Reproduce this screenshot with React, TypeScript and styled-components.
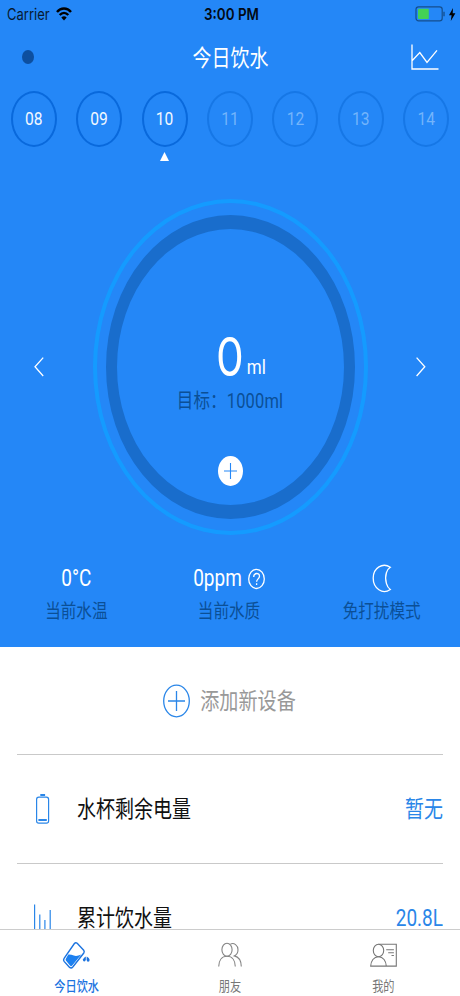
import React from 'react';
import styled, { createGlobalStyle } from 'styled-components';

const BLUE = '#2487f7';
const NAVY = '#0b4f96';
const ACCENT = '#2a86e8';

const GlobalStyle = createGlobalStyle`
  * { box-sizing: border-box; }
  body { margin: 0; background: #fff; }
`;

const Screen = styled.div`
  width: 460px;
  height: 996px;
  display: flex;
  flex-direction: column;
  overflow: hidden;
  background: #fff;
  font-family: Roboto, 'Noto Sans CJK SC', sans-serif;
`;

/* Type is condensed: drawn at its natural width and stretched in height. */
const Text = styled.span<{ $size: number; $color?: string; $weight?: number; $track?: number }>`
  display: inline-block;
  flex: none;
  white-space: nowrap;
  line-height: 20px;
  font-size: ${(p) => p.$size}px;
  font-weight: ${(p) => p.$weight ?? 400};
  letter-spacing: ${(p) => p.$track ?? 0}px;
  color: ${(p) => p.$color ?? '#fff'};
  transform: scaleY(1.218);
`;

const InterText = styled(Text)`
  font-family: Inter, sans-serif;
`;

const Title = styled(Text)`
  margin-top: 3px;
`;

const DeviceText = styled(Text)`
  margin-top: 4px;
`;

const RowText = styled(Text)`
  margin-top: 2px;
  line-height: 17px;
`;

const Hero = styled.section`
  flex: none;
  height: 646.5px;
  display: flex;
  flex-direction: column;
  background: ${BLUE};
`;

const StatusBar = styled.header`
  height: 28px;
  padding: 0 4px 0 7px;
  display: grid;
  grid-template-columns: 1fr auto 1fr;
  align-items: center;
`;

const StatusGroup = styled.div<{ $end?: boolean }>`
  display: flex;
  align-items: center;
  gap: ${(p) => (p.$end ? 4 : 6)}px;
  justify-content: ${(p) => (p.$end ? 'flex-end' : 'flex-start')};
`;

const NavBar = styled.nav`
  height: 58px;
  padding: 0 21px 0 22px;
  display: grid;
  grid-template-columns: 1fr auto 1fr;
  align-items: center;
`;

const StatusDot = styled.span`
  width: 12px;
  height: 14px;
  border-radius: 50%;
  background: #0d4f9f;
`;

const ChartButton = styled.span`
  justify-self: end;
  height: 28px;
`;

const Days = styled.div`
  height: 77px;
  padding: 5px 1px 0;
  display: grid;
  grid-template-columns: repeat(7, 1fr);
  justify-items: center;
`;

const Day = styled.div`
  display: flex;
  flex-direction: column;
  align-items: center;
  gap: 5px;
`;

const DayCircle = styled.div<{ $future: boolean }>`
  width: 46px;
  height: 56px;
  display: grid;
  place-items: center;
  border: 2px solid ${(p) => (p.$future ? '#1677e6' : '#0969dc')};
  border-radius: 50%;
`;

const Dial = styled.div`
  margin-top: 36px;
  height: 336px;
  padding: 0 34px;
  display: flex;
  align-items: center;
  justify-content: space-between;
`;

const OuterRing = styled.div`
  width: 275px;
  height: 336px;
  display: grid;
  place-items: center;
  border: 4px solid #149bff;
  border-radius: 50%;
`;

const InnerRing = styled.div`
  width: 249px;
  height: 304px;
  padding-top: 118px;
  display: flex;
  flex-direction: column;
  align-items: center;
  border: solid #196dcc;
  border-width: 14px 11px;
  border-radius: 50%;
`;

const Amount = styled.div`
  height: 44px;
  padding-left: 22px;
  display: flex;
  align-items: baseline;
  gap: 3px;
`;

const Goal = styled.div`
  height: 20px;
  margin-top: 1px;
`;

const AddWater = styled.div`
  width: 25px;
  height: 30px;
  margin-top: 44px;
  display: grid;
  place-items: center;
  border-radius: 50%;
  background: #fff;
`;

const Stats = styled.div`
  height: 66px;
  margin-top: 30px;
  padding: 0 2px 0 0;
  display: grid;
  grid-template-columns: repeat(3, 1fr);
`;

const Stat = styled.div`
  display: flex;
  flex-direction: column;
  align-items: center;
`;

const StatValue = styled.div`
  height: 28px;
  display: flex;
  align-items: center;
  gap: 6px;
`;

const StatLabel = styled.div`
  height: 20px;
  margin-top: 9px;
`;

const List = styled.main`
  flex: 1;
  min-height: 0;
  overflow: hidden;
  padding: 0 17px;
`;

const AddDevice = styled.div`
  height: 108.5px;
  padding-right: 1px;
  display: flex;
  align-items: center;
  justify-content: center;
  gap: 10px;
  border-bottom: 1px solid #c9c9c9;
`;

const Row = styled.div`
  height: 108.5px;
  padding-left: 15px;
  display: grid;
  grid-template-columns: 45px 1fr auto;
  align-items: center;
  border-bottom: 1px solid #c9c9c9;
`;

const TabBar = styled.footer`
  flex: none;
  height: 67px;
  display: grid;
  grid-template-columns: repeat(3, 1fr);
  border-top: 1px solid #ccc;
  background: #fff;
`;

const Tab = styled.div`
  display: flex;
  flex-direction: column;
  align-items: center;
  padding-top: 12px;
  gap: 8px;
`;

const Icon = styled.svg`
  display: block;
  flex: none;
  overflow: visible;
  fill: none;
`;

const Wifi = () => (
  <Icon width="16" height="14" viewBox="0 0 16 14" stroke="#000" strokeWidth="2.4">
    <path d="M1 4.9C4.8.4 11.2.4 15 4.9" />
    <path d="M3.7 8C6.2 5.2 9.8 5.2 12.3 8" />
    <path d="M8 13.6 5.3 10.4Q8 8 10.7 10.4Z" fill="#000" stroke="none" />
  </Icon>
);

const Charging = () => (
  <>
    <Icon width="29" height="16" viewBox="0 0 29 16">
      <rect x="0" y=".9" width="26.2" height="14" rx="2.6" stroke="#144e8d" strokeWidth="1.2" />
      <rect x="2" y="2.8" width="10.8" height="10.2" rx=".8" fill="#43d255" />
      <path d="M28 5.7v4.6" stroke="#144e8d" strokeWidth="1.3" />
    </Icon>
    <Icon width="7" height="13" viewBox="0 0 7 13">
      <path d="M4 0 0 7.2h2.6L1.8 13 6.4 5.3H3.7Z" fill="#000" />
    </Icon>
  </>
);

const LineChart = () => (
  <Icon width="28" height="28" viewBox="0 0 28 28" stroke="#fff" strokeWidth="1.3">
    <path d="M1 1.5V26H27.5M1.3 17.5 8.8 9.5 16 19.5 26 7.3" />
  </Icon>
);

const Chevron = ({ right = false }: { right?: boolean }) => (
  <Icon width="10" height="20" viewBox="0 0 10 20" stroke="#fff" strokeWidth="1.3">
    <path d={right ? 'M.6 .6 8.8 9.8 .6 19' : 'M9.2 .6 1 9.8 9.2 19'} />
  </Icon>
);

const Marker = () => (
  <Icon width="9" height="9" viewBox="0 0 9 9">
    <path d="M4.5 0 9 9H0Z" fill="#fff" />
  </Icon>
);

const Plus = () => (
  <Icon width="13" height="16" viewBox="0 0 13 16" stroke={BLUE} strokeWidth="1.1">
    <path d="M6.5 0v16M0 8h13" />
  </Icon>
);

const Help = () => (
  <Icon width="17" height="21" viewBox="0 0 17 21" stroke="#fff" strokeWidth="1.3">
    <ellipse cx="8.5" cy="9.9" rx="7.8" ry="9.6" />
    <path d="M5.7 8c0-4.6 5.8-4.5 5.8-.8 0 2.5-2.9 2.9-2.9 5.6M8.6 14.2v1.8" />
  </Icon>
);

const Moon = () => (
  <Icon width="18" height="28" viewBox="0 0 18 28" stroke="#fff" strokeWidth="1.3">
    <path d="M17.3 2.2C9.8-2.7.2 2.5.2 13.1s9.5 16.8 17.1 11.4Q14.6 22.7 13.4 18.3C12.5 14.8 12.3 11.1 13.4 7.7Q14.6 3.8 17.3 2.2Z" />
  </Icon>
);

const CirclePlus = () => (
  <Icon width="27" height="33" viewBox="0 0 27 33" stroke={ACCENT} strokeWidth="1.3">
    <ellipse cx="13.5" cy="17" rx="12.8" ry="15.8" />
    <path d="M13.5 7v20M5 17h17" />
  </Icon>
);

const Cell = () => (
  <Icon width="21" height="30" viewBox="0 0 21 30" stroke={ACCENT} strokeWidth="1.2">
    <rect x="4.6" y="3.2" width="12" height="26" rx="2.2" />
    <path d="M8.3 1h4.8M6.4 26h8.4" strokeWidth="1.8" />
  </Icon>
);

const Bars = () => (
  <Icon width="21" height="26" viewBox="0 0 21 26" stroke={ACCENT} strokeWidth="1.2">
    <path d="M2.6 .5v26M7.8 10.5v16M12.9 16v10.5M18.2 6v20.5" />
  </Icon>
);

const Bottle = () => (
  <Icon width="27" height="27" viewBox="0 0 27 27" stroke="#1c73df" strokeWidth="1.4">
    <path d="M11.4 1.5Q12.7.1 14.2 1.3L20.7 8.3Q21.7 9.6 20.8 11L9.8 25Q8.3 26.8 6.6 25.4L1.1 19.4Q0 18 1.1 16.4Z" />
    <path d="M5.3 12.6Q8 12.4 10.8 13.6T18.3 12.6L9 23.8Q8 24.8 7 23.6L2.9 18.6Q2.3 17.6 3 16.6Z" fill="#1c80f0" stroke="none" />
    <path d="M22.8 14.6V17.8Q22.5 19.7 21 19.5 19.6 19 20.1 17.3 20.8 15.8 22.8 14.6Z" fill="#1c73df" stroke="none" />
    <path d="M23.7 14.4Q26.4 15.8 26.6 17.7 26.6 19.6 25.1 19.8 23.7 19.6 23.6 17.8Z" fill="#1c73df" stroke="none" />
  </Icon>
);

const Friends = () => (
  <Icon width="24" height="27" viewBox="0 0 24 27" stroke="#858585" strokeWidth="1.1">
    <ellipse cx="9" cy="7.7" rx="5.1" ry="6.5" />
    <path d="M.7 24.5C.8 18.8 3.5 14.3 9 14.3s8.2 4.5 8.3 10.2M12.5 2.1C16 .4 20 3.2 20 7.7c0 3-1.7 5.3-3.7 6.2 4.4 1 6.9 5.5 7 10.6" />
  </Icon>
);

const Profile = () => (
  <Icon width="27" height="27" viewBox="0 0 27 27" stroke="#777" strokeWidth="1.1">
    <ellipse cx="8.5" cy="8.5" rx="5.2" ry="6.2" />
    <path d="M8.5 2.3h17.8v21.8H.7c.2-5 3-9.4 7.8-9.4s7.5 4.4 7.8 9.4M16.2 7.7h7.7M18.2 10.7h5.7M21.5 13.5h2.4" />
  </Icon>
);

const days = ['08', '09', '10', '11', '12', '13', '14'];
const TODAY = 2;

export default function App() {
  return (
    <>
      <GlobalStyle />
      <Screen>
        <Hero>
          <StatusBar>
            <StatusGroup>
              <InterText $size={13} $color="#071a30">Carrier</InterText>
              <Wifi />
            </StatusGroup>
            <InterText $size={13.4} $weight={600} $color="#020a14">3:00 PM</InterText>
            <StatusGroup $end>
              <Charging />
            </StatusGroup>
          </StatusBar>

          <NavBar>
            <StatusDot />
            <Title $size={19}>今日饮水</Title>
            <ChartButton><LineChart /></ChartButton>
          </NavBar>

          <Days>
            {days.map((day, i) => (
              <Day key={day}>
                <DayCircle $future={i > TODAY}>
                  <Text $size={15.6} $color={i > TODAY ? '#73b4fb' : '#f2f8ff'}>{day}</Text>
                </DayCircle>
                {i === TODAY && <Marker />}
              </Day>
            ))}
          </Days>

          <Dial>
            <Chevron />
            <OuterRing>
              <InnerRing>
                <Amount>
                  <InterText $size={44}>0</InterText>
                  <Text $size={17}>ml</Text>
                </Amount>
                <Goal><Text $size={16.5} $track={0.15} $color={NAVY}>目标：1000ml</Text></Goal>
                <AddWater><Plus /></AddWater>
              </InnerRing>
            </OuterRing>
            <Chevron right />
          </Dial>

          <Stats>
            <Stat>
              <StatValue><Text $size={19}>0°C</Text></StatValue>
              <StatLabel><Text $size={15.6} $color={NAVY}>当前水温</Text></StatLabel>
            </Stat>
            <Stat>
              <StatValue><Text $size={19}>0ppm</Text><Help /></StatValue>
              <StatLabel><Text $size={15.6} $color={NAVY}>当前水质</Text></StatLabel>
            </Stat>
            <Stat>
              <StatValue><Moon /></StatValue>
              <StatLabel><Text $size={15.6} $color={NAVY}>免打扰模式</Text></StatLabel>
            </Stat>
          </Stats>
        </Hero>

        <List>
          <AddDevice>
            <CirclePlus />
            <DeviceText $size={19.1} $color="#999">添加新设备</DeviceText>
          </AddDevice>
          <Row>
            <Cell />
            <RowText $size={19} $color="#111">水杯剩余电量</RowText>
            <RowText $size={19} $color={ACCENT}>暂无</RowText>
          </Row>
          <Row>
            <Bars />
            <RowText $size={19} $color="#111">累计饮水量</RowText>
            <RowText $size={19} $color={ACCENT}>20.8L</RowText>
          </Row>
        </List>

        <TabBar>
          <Tab>
            <Bottle />
            <Text $size={11.2} $weight={500} $color="#1c73df">今日饮水</Text>
          </Tab>
          <Tab>
            <Friends />
            <Text $size={11.2} $color="#777">朋友</Text>
          </Tab>
          <Tab>
            <Profile />
            <Text $size={11.2} $color="#777">我的</Text>
          </Tab>
        </TabBar>
      </Screen>
    </>
  );
}
